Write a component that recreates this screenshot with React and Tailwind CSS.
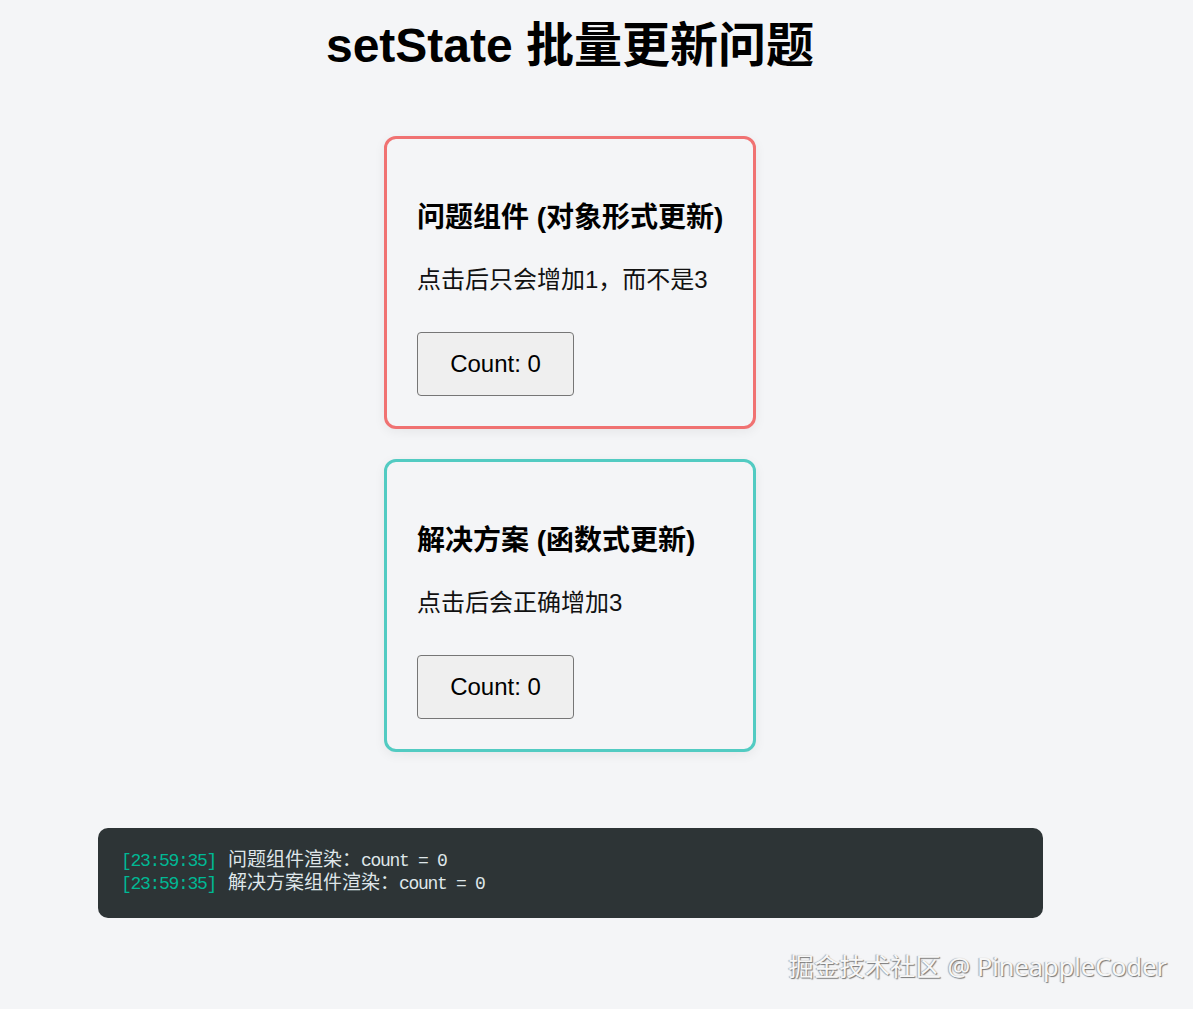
import { useState } from 'react';

const sans = "font-['Liberation_Sans','Noto_Sans_CJK_SC',sans-serif]";

const DemoCard = ({ title, desc, borderClass, count, onClick }) => (
    <div className={`w-[372px] rounded-[12px] border-[3px] ${borderClass} bg-[#f4f5f7] px-[30px] pt-[59px] pb-[30px] shadow-[0_3px_12px_rgba(0,0,0,0.06)]`}>
        {/* Heading */}
        <h3 className="whitespace-nowrap text-[28px] font-bold leading-[40px] text-black">{title}</h3>

        {/* Description */}
        <p className="mt-[24px] whitespace-nowrap text-[24px] leading-[36px] text-[#111]">{desc}</p>

        <button
            onClick={onClick}
            className="mt-[34px] flex h-[64px] w-[157px] items-center justify-center rounded-[4px] border border-[#767676] bg-[#efefef] text-[24px] text-black"
        >
            Count: {count}
        </button>
    </div>
);

const LogLine = ({ time, label, value }) => (
    <div className="flex h-[23px] items-baseline whitespace-nowrap leading-[23px]">
        <span className="text-[18px] tracking-[-1.3px] text-[#00b894]">[{time}]</span>
        <span className="ml-[12px] text-[19px] text-[#dfe6e9]">{label}</span>
        <span className="text-[18px] tracking-[-1.3px] text-[#dfe6e9]">count = {value}</span>
    </div>
);

export default function App() {
    const [badCount, setBadCount] = useState(0);
    const [goodCount, setGoodCount] = useState(0);

    return (
        <div className={`${sans} min-h-[1009px] w-full bg-[#f4f5f7]`}>
            <div className="flex w-[1140px] flex-col items-center">
                {/* Title */}
                <h1 className="mt-[14px] text-[48px] font-bold leading-[64px] text-black">
                    setState 批量更新问题
                </h1>

                {/* Cards */}
                <div className="mt-[58px] flex flex-col gap-[30px]">
                    <DemoCard
                        title="问题组件 (对象形式更新)"
                        desc="点击后只会增加1，而不是3"
                        borderClass="border-[#f07272]"
                        count={badCount}
                        onClick={() => setBadCount((c) => c + 1)}
                    />
                    <DemoCard
                        title="解决方案 (函数式更新)"
                        desc="点击后会正确增加3"
                        borderClass="border-[#52cbc2]"
                        count={goodCount}
                        onClick={() => setGoodCount((c) => c + 3)}
                    />
                </div>

                {/* Render log */}
                <div className="mt-[76px] w-[945px] self-start ml-[98px] rounded-[10px] bg-[#2d3436] px-[23px] py-[22px] font-['Liberation_Mono','Noto_Sans_CJK_SC',monospace]">
                    <LogLine time="23:59:35" label="问题组件渲染：" value={badCount} />
                    <LogLine time="23:59:35" label="解决方案组件渲染：" value={goodCount} />
                </div>
            </div>

            {/* Watermark */}
            <div className="mt-[30px] flex justify-end pr-[26px]">
                <span className="font-['Noto_Sans','Noto_Sans_CJK_SC',sans-serif] text-[25.4px] leading-[36px] text-[#f7f7f7] [text-shadow:1px_1px_1px_#777,-1px_0_1px_#aaa]">
                    掘金技术社区 @ PineappleCoder
                </span>
            </div>
        </div>
    );
}
